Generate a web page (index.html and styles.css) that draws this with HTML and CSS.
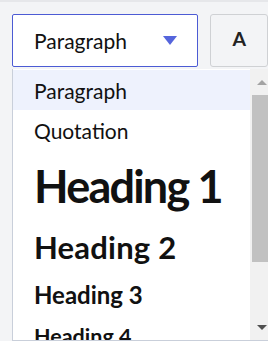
FILE: index.html
```html
<!DOCTYPE html>
<html>
<head>
<meta charset="utf-8">
<link rel="stylesheet" href="styles.css">
</head>
<body>
<div class="toolbar">
  <div class="select">
    <span class="select-label">Paragraph</span>
    <svg class="caret" width="14" height="9" viewBox="0 0 14 9"><path d="M0 0H14L7 9Z" fill="#5565dc"/></svg>
  </div>
  <div class="btn">A</div>
</div>
<div class="menu">
  <div class="list">
    <div class="opt opt-p active">Paragraph</div>
    <div class="opt opt-q">Quotation</div>
    <div class="opt opt-h1">Heading 1</div>
    <div class="opt opt-h2">Heading 2</div>
    <div class="opt opt-h3">Heading 3</div>
    <div class="opt opt-h4">Heading 4</div>
  </div>
  <div class="scrollbar">
    <div class="arrow arrow-up"></div>
    <div class="thumb"></div>
    <div class="arrow arrow-down"></div>
  </div>
</div>
</body>
</html>
```

FILE: styles.css
```css
html, body {
  margin: 0;
  padding: 0;
}
body {
  width: 268px;
  height: 341px;
  overflow: hidden;
  background: #f3f4f6;
  border-top: 2px solid #e6e7ea;
  box-sizing: border-box;
  font-family: Lato, "Noto Sans", sans-serif;
  color: #111;
  position: relative;
}
.toolbar {
  display: flex;
  gap: 12px;
  padding: 12px 0 0 12px;
}
.select {
  width: 192px;
  height: 53px;
  box-sizing: border-box;
  border: 1px solid #4c5bd4;
  border-radius: 2px;
  background: #fff;
  display: flex;
  align-items: center;
  justify-content: space-between;
  padding: 0 20px 0 21px;
}
.select-label {
  font-size: 21px;
}
.caret {
  display: block;
}
.btn {
  width: 60px;
  height: 53px;
  box-sizing: border-box;
  border: 1px solid #cfd1d4;
  border-radius: 3px;
  background: #f3f4f6;
  display: flex;
  align-items: center;
  padding: 0 0 4px 22px;
  font-weight: 700;
  font-size: 19.5px;
  color: #222;
}
.menu {
  position: absolute;
  left: 12px;
  top: 67px;
  width: 280px;
  height: 272px;
  box-sizing: border-box;
  border-left: 1px solid #c9cfda;
  border-bottom: 1px solid #c9cfda;
  background: #fff;
  display: flex;
  overflow: hidden;
}
.list {
  width: 237px;
  flex: none;
  overflow: hidden;
}
.opt {
  padding-left: 21px;
  white-space: nowrap;
}
.opt.active {
  background: #eef2fd;
}
.opt-p, .opt-q {
  font-size: 21px;
  height: 40px;
  line-height: 41px;
}
.opt-p {
  margin-top: 1px;
}
.opt-h1 {
  font-size: 45px;
  font-weight: 700;
  letter-spacing: -1.8px;
  line-height: 73px;
}
.opt-h2 {
  font-size: 31px;
  font-weight: 700;
  letter-spacing: 0.2px;
  line-height: 48px;
}
.opt-h3 {
  font-size: 24px;
  font-weight: 700;
  line-height: 47px;
}
.opt-h4 {
  font-size: 21.5px;
  font-weight: 700;
  line-height: 37px;
}
.scrollbar {
  width: 24px;
  flex: none;
  background: #f1f1f1;
  display: flex;
  flex-direction: column;
  align-items: flex-start;
  padding: 11px 0 10px 2px;
  box-sizing: border-box;
}
.arrow {
  width: 0;
  height: 0;
  margin-left: 5px;
  border-left: 5px solid transparent;
  border-right: 5px solid transparent;
}
.arrow-up {
  border-bottom: 5px solid #a3a3a3;
}
.arrow-down {
  margin-top: auto;
  border-top: 5px solid #505050;
}
.thumb {
  width: 22px;
  height: 167px;
  margin-top: 10px;
  background: #c1c1c1;
}
```
